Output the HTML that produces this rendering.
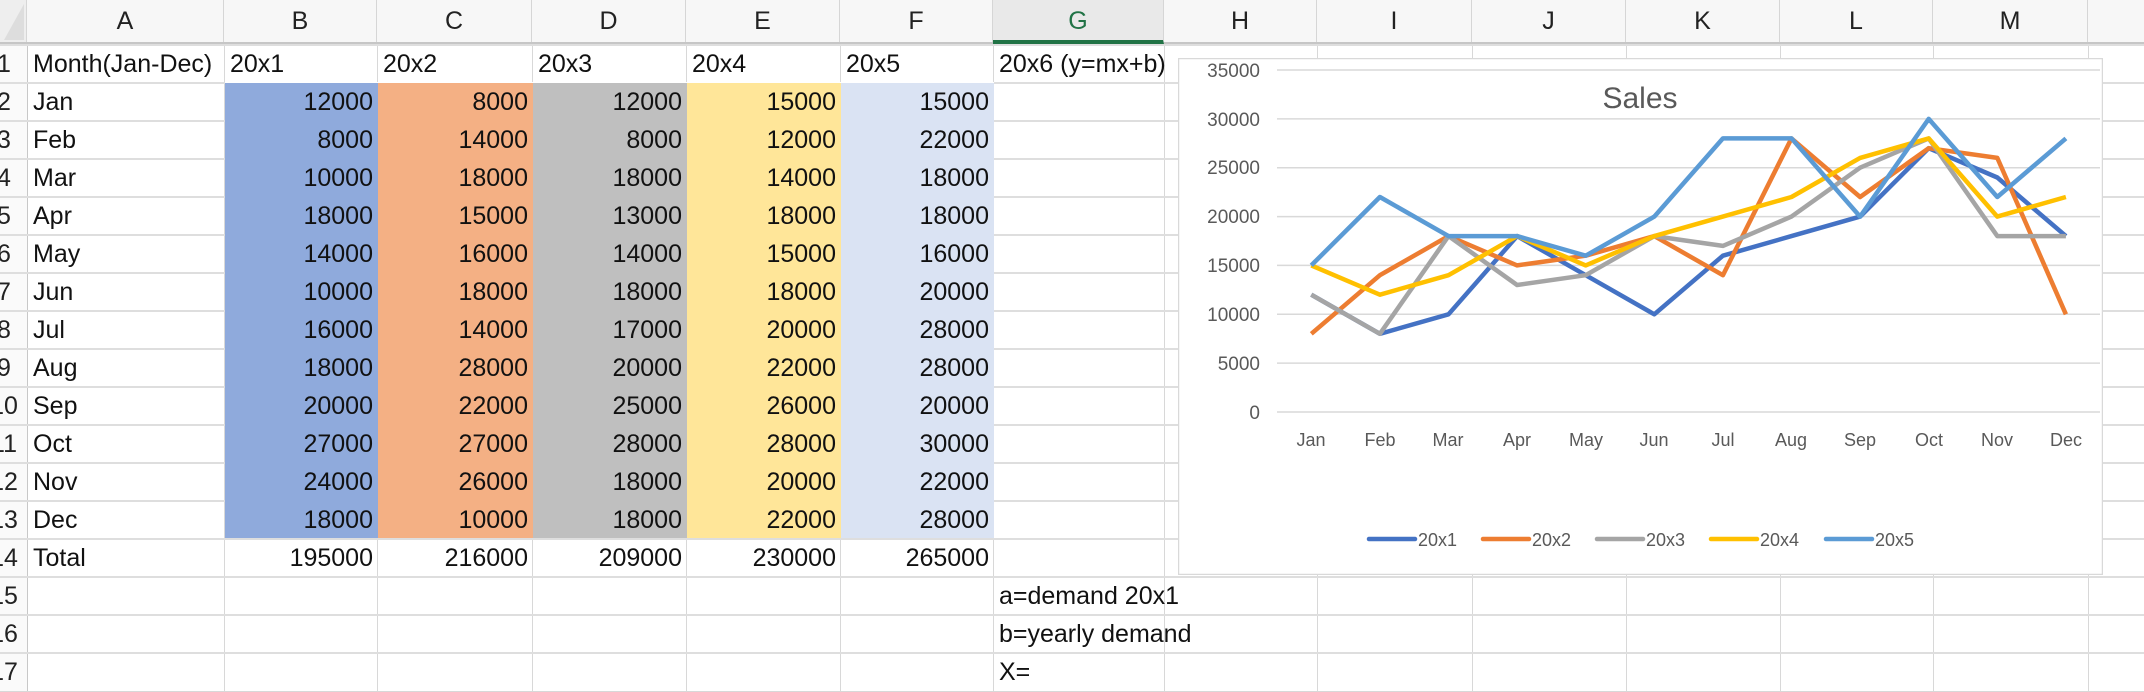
<!DOCTYPE html>
<html><head><meta charset="utf-8"><style>
*{margin:0;padding:0;box-sizing:border-box}
body{width:2144px;height:692px;overflow:hidden;background:#fff;position:relative;font-family:"Liberation Sans",sans-serif;color:#111}
#hdr{position:absolute;left:0;top:0;width:2144px;height:44px;background:#f7f7f7;border-bottom:2px solid #c6c6c6}
.h{position:absolute;top:0;height:42px;line-height:42px;text-align:center;font-size:25px;color:#222;border-right:1px solid #d6d6d6}
table{position:absolute;left:-20px;top:44px;border-collapse:collapse;table-layout:fixed;width:2208px}
td{height:38px;border:1px solid #d8d8d8;border-top:2px solid #dedede;font-size:25px;line-height:34px;padding:0 5px;white-space:nowrap;overflow:visible}
td.r{text-align:right;padding-right:4px}
td.n{text-align:center;padding:0;background:#fafafa;color:#222;border-right:1px solid #c8c8c8}
.b{background:#8faadc}.c{background:#f4b084}.d{background:#bfbfbf}.e{background:#ffe699}.f{background:#dae3f3}
.b,.c,.d,.e,.f{border-color:transparent}
svg text{font-family:"Liberation Sans",sans-serif;fill:#595959}
</style></head><body>
<div id="hdr">
<div class="h" style="left:0;width:27px;background:#eee"></div>
<div class="h" style="left:27px;width:197px">A</div>
<div class="h" style="left:224px;width:153px">B</div>
<div class="h" style="left:377px;width:155px">C</div>
<div class="h" style="left:532px;width:154px">D</div>
<div class="h" style="left:686px;width:154px">E</div>
<div class="h" style="left:840px;width:153px">F</div>
<div class="h" style="left:993px;width:171px;color:#217346;background:#e9e9e9;border-bottom:4px solid #217346;height:44px">G</div>
<div class="h" style="left:1164px;width:153px">H</div>
<div class="h" style="left:1317px;width:155px">I</div>
<div class="h" style="left:1472px;width:154px">J</div>
<div class="h" style="left:1626px;width:154px">K</div>
<div class="h" style="left:1780px;width:153px">L</div>
<div class="h" style="left:1933px;width:155px">M</div>
<div class="h" style="left:2088px;width:100px"></div>
</div>
<svg style="position:absolute;left:0;top:0" width="27" height="44"><polygon points="24,4 24,40 4,40" fill="#ddd"/></svg>
<table>
<colgroup><col style="width:47px"><col style="width:197px"><col style="width:153px"><col style="width:155px"><col style="width:154px"><col style="width:154px"><col style="width:153px"><col style="width:171px"><col style="width:153px"><col style="width:155px"><col style="width:154px"><col style="width:154px"><col style="width:153px"><col style="width:155px"><col style="width:100px"></colgroup>
<tr><td class="n">1</td><td>Month(Jan-Dec)</td><td>20x1</td><td>20x2</td><td>20x3</td><td>20x4</td><td>20x5</td><td>20x6 (y=mx+b)</td><td></td><td></td><td></td><td></td><td></td><td></td><td></td></tr>
<tr><td class="n">2</td><td>Jan</td><td class="r b">12000</td><td class="r c">8000</td><td class="r d">12000</td><td class="r e">15000</td><td class="r f">15000</td><td></td><td></td><td></td><td></td><td></td><td></td><td></td><td></td></tr>
<tr><td class="n">3</td><td>Feb</td><td class="r b">8000</td><td class="r c">14000</td><td class="r d">8000</td><td class="r e">12000</td><td class="r f">22000</td><td></td><td></td><td></td><td></td><td></td><td></td><td></td><td></td></tr>
<tr><td class="n">4</td><td>Mar</td><td class="r b">10000</td><td class="r c">18000</td><td class="r d">18000</td><td class="r e">14000</td><td class="r f">18000</td><td></td><td></td><td></td><td></td><td></td><td></td><td></td><td></td></tr>
<tr><td class="n">5</td><td>Apr</td><td class="r b">18000</td><td class="r c">15000</td><td class="r d">13000</td><td class="r e">18000</td><td class="r f">18000</td><td></td><td></td><td></td><td></td><td></td><td></td><td></td><td></td></tr>
<tr><td class="n">6</td><td>May</td><td class="r b">14000</td><td class="r c">16000</td><td class="r d">14000</td><td class="r e">15000</td><td class="r f">16000</td><td></td><td></td><td></td><td></td><td></td><td></td><td></td><td></td></tr>
<tr><td class="n">7</td><td>Jun</td><td class="r b">10000</td><td class="r c">18000</td><td class="r d">18000</td><td class="r e">18000</td><td class="r f">20000</td><td></td><td></td><td></td><td></td><td></td><td></td><td></td><td></td></tr>
<tr><td class="n">8</td><td>Jul</td><td class="r b">16000</td><td class="r c">14000</td><td class="r d">17000</td><td class="r e">20000</td><td class="r f">28000</td><td></td><td></td><td></td><td></td><td></td><td></td><td></td><td></td></tr>
<tr><td class="n">9</td><td>Aug</td><td class="r b">18000</td><td class="r c">28000</td><td class="r d">20000</td><td class="r e">22000</td><td class="r f">28000</td><td></td><td></td><td></td><td></td><td></td><td></td><td></td><td></td></tr>
<tr><td class="n">10</td><td>Sep</td><td class="r b">20000</td><td class="r c">22000</td><td class="r d">25000</td><td class="r e">26000</td><td class="r f">20000</td><td></td><td></td><td></td><td></td><td></td><td></td><td></td><td></td></tr>
<tr><td class="n">11</td><td>Oct</td><td class="r b">27000</td><td class="r c">27000</td><td class="r d">28000</td><td class="r e">28000</td><td class="r f">30000</td><td></td><td></td><td></td><td></td><td></td><td></td><td></td><td></td></tr>
<tr><td class="n">12</td><td>Nov</td><td class="r b">24000</td><td class="r c">26000</td><td class="r d">18000</td><td class="r e">20000</td><td class="r f">22000</td><td></td><td></td><td></td><td></td><td></td><td></td><td></td><td></td></tr>
<tr><td class="n">13</td><td>Dec</td><td class="r b">18000</td><td class="r c">10000</td><td class="r d">18000</td><td class="r e">22000</td><td class="r f">28000</td><td></td><td></td><td></td><td></td><td></td><td></td><td></td><td></td></tr>
<tr><td class="n">14</td><td>Total</td><td class="r">195000</td><td class="r">216000</td><td class="r">209000</td><td class="r">230000</td><td class="r">265000</td><td></td><td></td><td></td><td></td><td></td><td></td><td></td><td></td></tr>
<tr><td class="n">15</td><td></td><td></td><td></td><td></td><td></td><td></td><td>a=demand 20x1</td><td></td><td></td><td></td><td></td><td></td><td></td><td></td></tr>
<tr><td class="n">16</td><td></td><td></td><td></td><td></td><td></td><td></td><td>b=yearly demand</td><td></td><td></td><td></td><td></td><td></td><td></td><td></td></tr>
<tr><td class="n">17</td><td></td><td></td><td></td><td></td><td></td><td></td><td>X=</td><td></td><td></td><td></td><td></td><td></td><td></td><td></td></tr>
</table>
<svg style="position:absolute;left:1178px;top:58px" width="925" height="517" viewBox="1178 58 925 517">
<rect x="1178.5" y="58.5" width="924" height="516" fill="#fff" stroke="#d9d9d9" stroke-width="1.5"/>
<g stroke="#d9d9d9" stroke-width="1.5">
<line x1="1277" x2="2100" y1="70" y2="70"/><line x1="1277" x2="2100" y1="118.9" y2="118.9"/><line x1="1277" x2="2100" y1="167.7" y2="167.7"/><line x1="1277" x2="2100" y1="216.6" y2="216.6"/><line x1="1277" x2="2100" y1="265.4" y2="265.4"/><line x1="1277" x2="2100" y1="314.3" y2="314.3"/><line x1="1277" x2="2100" y1="363.1" y2="363.1"/><line x1="1277" x2="2100" y1="412" y2="412"/>
</g>
<g font-size="19" text-anchor="end">
<text x="1260" y="77">35000</text><text x="1260" y="126">30000</text><text x="1260" y="174">25000</text><text x="1260" y="223">20000</text><text x="1260" y="272">15000</text><text x="1260" y="321">10000</text><text x="1260" y="370">5000</text><text x="1260" y="419">0</text>
</g>
<text x="1640" y="108" font-size="30" text-anchor="middle">Sales</text>
<g font-size="18" text-anchor="middle">
<text x="1311" y="446">Jan</text><text x="1380" y="446">Feb</text><text x="1448" y="446">Mar</text><text x="1517" y="446">Apr</text><text x="1586" y="446">May</text><text x="1654" y="446">Jun</text><text x="1723" y="446">Jul</text><text x="1791" y="446">Aug</text><text x="1860" y="446">Sep</text><text x="1929" y="446">Oct</text><text x="1997" y="446">Nov</text><text x="2066" y="446">Dec</text>
</g>
<g fill="none" stroke-width="4.5" stroke-linejoin="round">
<polyline stroke="#4472c4" points="1311.3,294.7 1379.9,333.8 1448.5,314.3 1517.1,236.1 1585.7,275.2 1654.3,314.3 1722.9,255.7 1791.5,236.1 1860.1,216.6 1928.7,148.2 1997.3,177.5 2065.9,236.1"/>
<polyline stroke="#ed7d31" points="1311.3,333.8 1379.9,275.2 1448.5,236.1 1517.1,265.4 1585.7,255.7 1654.3,236.1 1722.9,275.2 1791.5,138.4 1860.1,197 1928.7,148.2 1997.3,157.9 2065.9,314.3"/>
<polyline stroke="#a5a5a5" points="1311.3,294.7 1379.9,333.8 1448.5,236.1 1517.1,285 1585.7,275.2 1654.3,236.1 1722.9,245.9 1791.5,216.6 1860.1,167.7 1928.7,138.4 1997.3,236.1 2065.9,236.1"/>
<polyline stroke="#ffc000" points="1311.3,265.4 1379.9,294.7 1448.5,275.2 1517.1,236.1 1585.7,265.4 1654.3,236.1 1722.9,216.6 1791.5,197 1860.1,157.9 1928.7,138.4 1997.3,216.6 2065.9,197"/>
<polyline stroke="#5b9bd5" points="1311.3,265.4 1379.9,197 1448.5,236.1 1517.1,236.1 1585.7,255.7 1654.3,216.6 1722.9,138.4 1791.5,138.4 1860.1,216.6 1928.7,118.9 1997.3,197 2065.9,138.4"/>
</g>
<g stroke-width="4.5" stroke-linecap="round">
<line x1="1369" x2="1415" y1="539" y2="539" stroke="#4472c4"/><line x1="1483" x2="1529" y1="539" y2="539" stroke="#ed7d31"/><line x1="1597" x2="1643" y1="539" y2="539" stroke="#a5a5a5"/><line x1="1711" x2="1757" y1="539" y2="539" stroke="#ffc000"/><line x1="1826" x2="1872" y1="539" y2="539" stroke="#5b9bd5"/>
</g>
<g font-size="18">
<text x="1418" y="546">20x1</text><text x="1532" y="546">20x2</text><text x="1646" y="546">20x3</text><text x="1760" y="546">20x4</text><text x="1875" y="546">20x5</text>
</g>
</svg>
</body></html>
